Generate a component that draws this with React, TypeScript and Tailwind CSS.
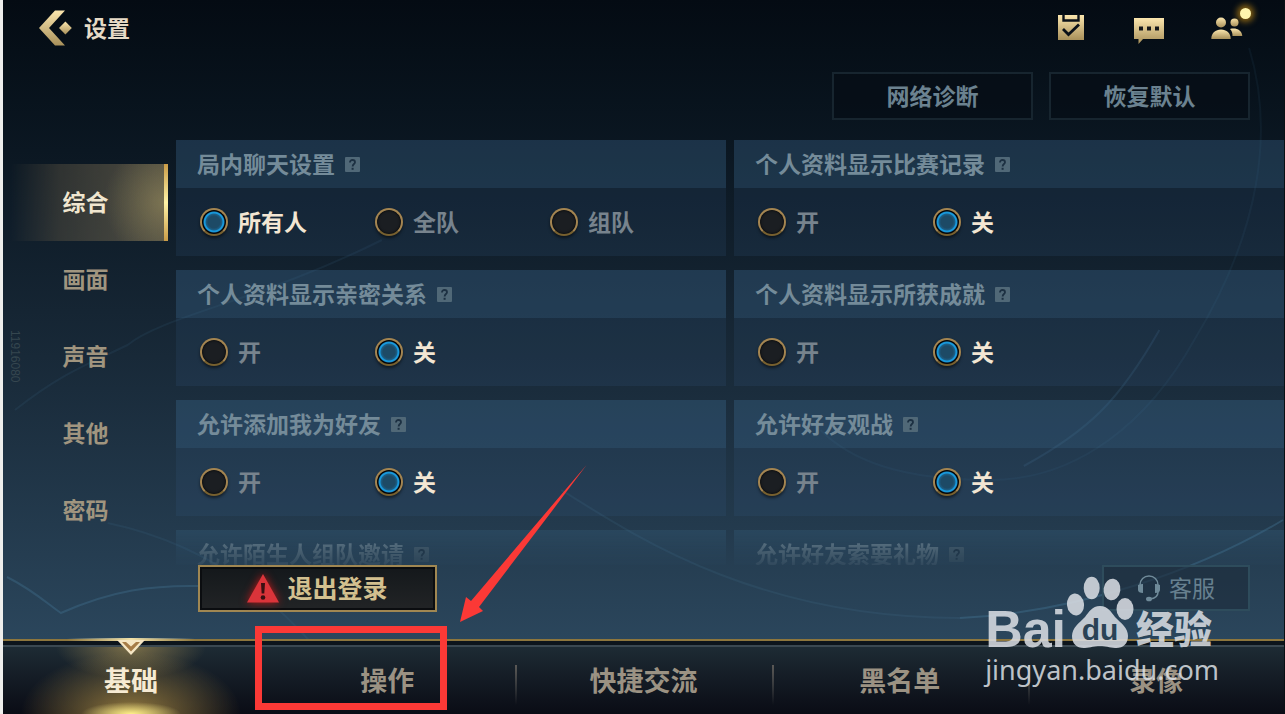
import { useState } from "react";
import clsx from "clsx";

type Setting = {
  id: string;
  title: string;
  options: string[];
  value: string;
};

const SETTINGS: Setting[] = [
  { id: "chat",     title: "局内聊天设置",       options: ["所有人", "全队", "组队"], value: "所有人" },
  { id: "record",   title: "个人资料显示比赛记录", options: ["开", "关"], value: "关" },
  { id: "intimacy", title: "个人资料显示亲密关系", options: ["开", "关"], value: "关" },
  { id: "achieve",  title: "个人资料显示所获成就", options: ["开", "关"], value: "关" },
  { id: "add",      title: "允许添加我为好友",     options: ["开", "关"], value: "关" },
  { id: "watch",    title: "允许好友观战",       options: ["开", "关"], value: "关" },
];

const NEXT_SETTINGS = ["允许陌生人组队邀请", "允许好友索要礼物"];
const SECTIONS = ["综合", "画面", "声音", "其他", "密码"];
const TABS = ["基础", "操作", "快捷交流", "黑名单", "录像"];

function GoldDefs() {
  return (
    <svg className="absolute h-0 w-0" aria-hidden="true">
      <defs>
        <linearGradient id="gold" x1="0" y1="0" x2="0" y2="1">
          <stop offset="0" stopColor="#fbe6ae" />
          <stop offset="1" stopColor="#a8905a" />
        </linearGradient>
      </defs>
    </svg>
  );
}

function Backdrop() {
  return (
    <svg
      className="pointer-events-none absolute inset-0 h-full w-full"
      viewBox="0 0 1285 714"
      preserveAspectRatio="none"
      fill="none"
      stroke="#4f8bb0"
      strokeWidth="2"
      aria-hidden="true"
    >
      <path d="M12 410C60 372 90 362 125 345C160 316 260 300 380 240" opacity=".1" />
      <path d="M4 577C30 590 45 604 58 613C110 590 150 585 198 586" opacity=".25" />
      <path d="M105 523C210 545 300 610 360 714" opacity=".1" />
      <path d="M960 618C1080 612 1200 570 1284 520" opacity=".28" />
      <path d="M560 490C640 540 760 618 960 618" opacity=".12" />
      <path d="M1250 48C1275 130 1262 230 1195 340C1150 420 1080 480 990 480C900 480 850 460 820 430" opacity=".08" />
      <path d="M1024 466C1090 430 1120 400 1160 330" opacity=".16" />
    </svg>
  );
}

function HelpIcon() {
  return (
    <svg className="h-[15px] w-[15px] shrink-0" viewBox="0 0 15 15" role="img" aria-label="?">
      <rect width="15" height="15" rx="1" fill="#506877" />
      <path d="M5 5.600C5 3.700 6 3 7.500 3S10 3.800 10 5.200C10 7 7.600 7 7.600 9.400" fill="none" stroke="#1c3042" strokeWidth="1.8" />
      <rect x="6.6" y="10.8" width="2" height="2" fill="#1c3042" />
    </svg>
  );
}

function PanelTitle({ id, text }: { id?: string; text: string }) {
  return (
    <div className="flex h-12 items-center gap-[10px] bg-[#3f7094]/22 px-[21px]">
      <h2 id={id} className="pb-[2px] text-[23px] font-bold text-[#748b99]">{text}</h2>
      <HelpIcon />
    </div>
  );
}

function SettingPanel({ setting }: { setting: Setting }) {
  const [value, setValue] = useState(setting.value);

  return (
    <section role="radiogroup" aria-labelledby={setting.id} className="bg-[#3c6496]/15">
      <PanelTitle id={setting.id} text={setting.title} />
      <div className="flex h-[68px] items-center pl-6">
        {setting.options.map((opt) => (
          <label
            key={opt}
            className={clsx(
              "flex w-[175px] shrink-0 items-center gap-[10px] text-[23px] font-bold",
              value === opt ? "text-[#f3e6d3]" : "text-[#77838d]"
            )}
          >
            <input
              type="radio"
              name={setting.id}
              value={opt}
              checked={value === opt}
              onChange={() => setValue(opt)}
              className="h-7 w-7 shrink-0 appearance-none rounded-full border-2 border-[#a48551] border-b-[#77602f] bg-[#1b1e22] shadow-[0_2px_3px_rgba(0,0,0,0.5),inset_0_0_3px_#000] checked:bg-[radial-gradient(circle_closest-side,#1d4a66_0_6px,#1b6088_8px,#1aa0e6_9px,#1aa0e6_10px,#07090c_11px)]"
            />
            <span className="pb-[2px]">{opt}</span>
          </label>
        ))}
      </div>
    </section>
  );
}

function Header() {
  return (
    <header className="flex h-14 items-center justify-between pl-[35px] pr-[41px]">
      <div className="flex items-center gap-3">
        <button type="button" aria-label="返回">
          <svg className="h-9 w-[34px]" viewBox="0 0 34 36" fill="url(#gold)">
            <path d="M1 18L17 .5H27L11 18L27 35.500H17Z" />
            <path d="M21 18L27.400 11.600L33.800 18L27.400 24.400Z" />
          </svg>
        </button>
        <h1 className="pb-[2px] text-[23px] font-bold text-[#e6dac6]">设置</h1>
      </div>
      <div className="flex items-center gap-[46px]">
        <button type="button" aria-label="任务">
          <svg className="h-8 w-8" viewBox="0 0 32 32">
            <path d="M3 3H29V28H3Z" fill="url(#gold)" />
            <path d="M8.500 2V8.500H23.500V2" fill="none" stroke="#0a1119" strokeWidth="2.400" />
            <path d="M8 17L13.500 22.500L24 12.500" fill="none" stroke="#0a1119" strokeWidth="2.800" />
          </svg>
        </button>
        <button type="button" aria-label="消息">
          <svg className="h-8 w-8" viewBox="0 0 32 32">
            <path d="M1 6H31V27H10L5.500 32V27H1Z" fill="url(#gold)" />
            <path d="M6 14.500H10V18.500H6ZM14 14.500H18V18.500H14ZM22 14.500H26V18.500H22Z" fill="#14171a" />
          </svg>
        </button>
        <button type="button" aria-label="好友" className="relative">
          <svg className="h-8 w-8" viewBox="0 0 32 32" fill="url(#gold)">
            <circle cx="10" cy="10.500" r="5" />
            <path d="M.3 27C.3 21 4.500 17.500 10 17.500S19.700 21 19.700 27Z" />
            <circle cx="23.500" cy="10.500" r="4" />
            <path d="M19 17C25 15.500 31 18 31.300 24H21.500C21.500 21 21 19 19 17Z" />
          </svg>
          <span className="absolute -right-2 -top-1 h-[11px] w-[11px] rounded-full bg-[#fff6ae] shadow-[0_0_6px_3px_rgba(190,135,20,0.75)]" />
        </button>
      </div>
    </header>
  );
}

function Sidebar() {
  const [active, setActive] = useState(SECTIONS[0]);

  return (
    <nav aria-label="设置分类" className="relative w-[165px] shrink-0 pt-6">
      {SECTIONS.map((name) => (
        <button
          key={name}
          type="button"
          onClick={() => setActive(name)}
          className={clsx(
            "flex h-[77px] w-full items-center justify-center border-r-4 pb-[2px] pl-1 text-[23px] font-bold",
            active === name
              ? "border-[#d9b45c] bg-[radial-gradient(ellipse_60px_60px_at_right,rgba(170,155,100,0.5),transparent),linear-gradient(to_right,transparent_5%,rgba(90,82,66,0.45)_35%,rgba(105,97,76,0.7))] text-[#f0e6cf] [border-image:linear-gradient(#c99a45,#fff3a6,#c99a45)_1]"
              : "border-transparent text-[#a0957f]"
          )}
        >
          {name}
        </button>
      ))}
      <span className="absolute left-1 top-[190px] font-['Liberation_Sans',sans-serif] text-xs text-[#35464f] [writing-mode:vertical-rl]">
        11916080
      </span>
    </nav>
  );
}

function BaiduMark() {
  return (
    <div className="pointer-events-none absolute bottom-[25px] right-[65px] text-[#dde1e6]/85">
      <div className="flex h-[76px] items-end pl-1">
        <span className="font-['Liberation_Sans',sans-serif] text-[52px] font-bold leading-[44px]">Bai</span>
        <svg className="h-[76px] w-[70px]" viewBox="0 0 70 76" fill="currentColor">
          <ellipse cx="9.500" cy="29.500" rx="8.500" ry="11" transform="rotate(-6 9.500 29.500)" />
          <ellipse cx="25.700" cy="13" rx="8" ry="11.200" />
          <ellipse cx="46" cy="14.500" rx="8.400" ry="10.800" transform="rotate(8 46 14.500)" />
          <ellipse cx="59" cy="34" rx="8.500" ry="11" />
          <path d="M34 31C42 31 45 37 49 42C55 48 62 53 62 61C62 69 57 73.500 49 73C43 72.500 40 71 34 71S25 72.500 19 73C11 73.500 6 69 6 61C6 53 13 48 19 42C23 37 26 31 34 31Z" />
          <text x="34" y="65" textAnchor="middle" fontFamily="Liberation Sans, sans-serif" fontSize="30" fontWeight="700" fill="#2b4255">du</text>
        </svg>
        <span className="text-[38px] font-black leading-[48px]">经验</span>
      </div>
      <p className="pl-1 font-['Noto_Sans',sans-serif] text-[27px] leading-[38px]">jingyan.baidu.com</p>
    </div>
  );
}

function TapHint() {
  return (
    <>
      <span className="pointer-events-none absolute -left-1 -top-[19px] h-[84px] w-[192px] border-[7px] border-[#fb3936]" />
      <svg className="pointer-events-none absolute -top-[182px] left-[200px] h-[160px] w-[130px]" viewBox="0 0 130 160" fill="#fb3936" aria-hidden="true">
        <path d="M1 159L7 134L12 138L90 46L127.500 2L93 48L20 144L24 148Z" />
      </svg>
    </>
  );
}

function BottomTabs() {
  const [active, setActive] = useState(TABS[0]);

  return (
    <nav aria-label="设置页签" className="relative border-t-2 border-[#8d763d]">
      <ul className="flex border-t-4 border-[#0d151c] bg-linear-to-b from-[#1e2c35] to-[#0a0c15]">
        {TABS.map((name, i) => (
          <li key={name} className="relative flex-1">
            <button
              type="button"
              onClick={() => setActive(name)}
              className={clsx(
                "h-[69px] w-full border-t-2 border-[#3a4851] text-[27px] font-bold",
                active === name
                  ? "bg-[radial-gradient(ellipse_50px_12px_at_bottom,#fff08a,transparent),radial-gradient(ellipse_110px_62px_at_bottom,rgba(190,155,75,0.75),transparent),radial-gradient(ellipse_75px_32px_at_top,rgba(185,155,85,0.6),transparent)] text-[#f6ead2]"
                  : "text-[#9b9283]"
              )}
            >
              {name}
            </button>
            {active === name && (
              <>
                <span className="absolute -top-[7px] left-1/4 h-[3px] w-1/2 bg-linear-to-r from-transparent via-[#f3e2a8] to-transparent" />
                <svg className="absolute -top-[5px] left-1/2 h-4 w-7 -translate-x-1/2" viewBox="0 0 28 16" aria-hidden="true">
                  <path d="M0 0H28L14 15Z" fill="#f5e6c4" />
                  <path d="M5 2H9L14 6.500L19 2H23L14 11.500Z" fill="#a67c48" />
                </svg>
              </>
            )}
            {i > 1 && <span className="absolute left-0 top-5 h-10 w-[2px] bg-linear-to-b from-[#5b5956] to-transparent" />}
            {i === 1 && <TapHint />}
          </li>
        ))}
      </ul>
      <BaiduMark />
    </nav>
  );
}

export default function App() {
  return (
    <div className="relative flex min-h-screen flex-col overflow-hidden border-l-[3px] border-r border-l-[#eeeeec] border-r-[#0a0f14] bg-linear-to-b from-[#040b13] via-[#182938] via-50% to-[#304e66] font-['Noto_Sans_CJK_SC',sans-serif]">
      <GoldDefs />
      <Backdrop />
      <div className="relative flex flex-1 flex-col">
        <Header />

        <div className="flex justify-end gap-4 pb-5 pr-[34px] pt-4">
          {["网络诊断", "恢复默认"].map((name) => (
            <button
              key={name}
              type="button"
              className="h-12 w-[201px] border-2 border-[#17252f] bg-[#060d15]/70 pb-[2px] text-[23px] font-bold text-[#6b8290]"
            >
              {name}
            </button>
          ))}
        </div>

        <div className="flex flex-1 gap-2">
          <Sidebar />
          <main className="flex min-w-0 flex-1 flex-col">
            <div className="grid grid-cols-2 gap-x-2 gap-y-[14px]">
              {SETTINGS.map((s) => (
                <SettingPanel key={s.id} setting={s} />
              ))}
              {NEXT_SETTINGS.map((title) => (
                <section key={title} className="h-[35px] overflow-hidden [mask-image:linear-gradient(to_bottom,#000,rgba(0,0,0,0.5)_50%,rgba(0,0,0,0.15))]">
                  <PanelTitle text={title} />
                </section>
              ))}
            </div>

            <div className="mt-auto flex items-start justify-between pb-[27px] pl-[22px] pr-[34px]">
              <button
                type="button"
                className="flex h-[47px] w-[239px] items-center justify-center gap-2 border-2 border-[#a08752] bg-linear-to-b from-[#14181b] to-[#222426] text-[25px] font-bold text-[#d3c08f] shadow-[inset_0_0_0_2px_#0b0d10]"
              >
                <svg className="h-[29px] w-8 drop-shadow-[0_0_4px_#c01818]" viewBox="0 0 32 29" aria-hidden="true">
                  <path d="M16 0L32 28.500H0Z" fill="#da343a" />
                  <path d="M14 9H18L17.300 19.500H14.700Z" fill="#3a1012" />
                  <circle cx="16" cy="23.500" r="2.300" fill="#3a1012" />
                </svg>
                <span className="pb-[2px]">退出登录</span>
              </button>
              <button
                type="button"
                className="flex h-[46px] w-[148px] items-center justify-center gap-2 border-2 border-[#2e4c5c] bg-[#1c2c3a]/60 text-[23px] text-[#67808f]"
              >
                <svg className="h-[27px] w-6" viewBox="0 0 24 27" fill="none" stroke="#6f8a99" aria-hidden="true">
                  <path d="M3 10C3 4.500 7 1 12 1S21 4.500 21 10" strokeWidth="1.500" />
                  <path d="M21 17C21 21 18 23.500 13 24" strokeWidth="1.500" />
                  <path d="M1 10C3 9 5 9 6 9V18C3 18 1 17 1 15ZM23 10C21 9 19 9 18 9V18C21 18 23 17 23 15Z" fill="#6f8a99" stroke="none" />
                  <ellipse cx="12" cy="24" rx="3" ry="2.300" fill="#6f8a99" stroke="none" />
                </svg>
                <span className="pb-[2px]">客服</span>
              </button>
            </div>
          </main>
        </div>
      </div>
      <BottomTabs />
    </div>
  );
}
